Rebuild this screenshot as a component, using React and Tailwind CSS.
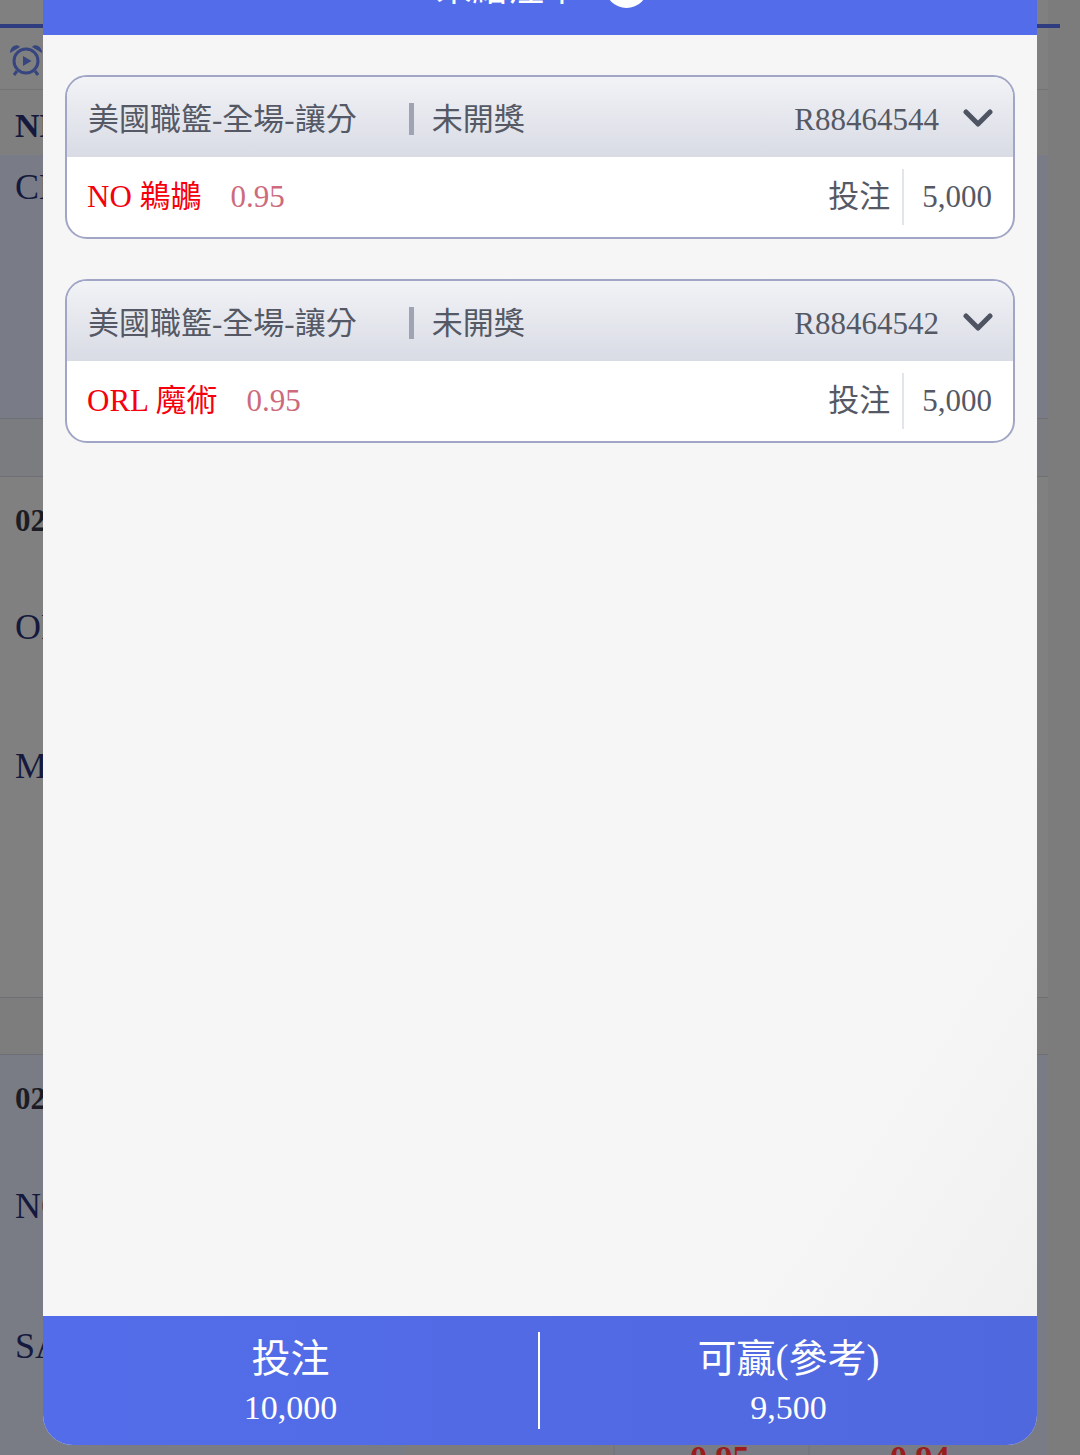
import React from 'react'

const bets = [
  { id: 'R88464544', team: 'NO 鵜鶘', odds: '0.95', amount: '5,000' },
  { id: 'R88464542', team: 'ORL 魔術', odds: '0.95', amount: '5,000' },
]

const AlarmIcon = () => (
  <svg width="34" height="34" viewBox="0 0 34 34" fill="none" className="shrink-0">
    <circle cx="17" cy="18" r="12" stroke="#36457f" strokeWidth="3" />
    <path d="M14 13 L22.5 18 L14 23 Z" fill="#36457f" />
    <path d="M1 10 C1 3 8 0 11 4 Z" fill="#36457f" />
    <path d="M33 10 C33 3 26 0 23 4 Z" fill="#36457f" />
    <path d="M8 28 L5 32 M26 28 L29 32" stroke="#36457f" strokeWidth="3" />
  </svg>
)

const Chevron = () => (
  <svg width="30" height="20" viewBox="0 0 30 20" fill="none" className="ml-[24px] mb-[4px] shrink-0">
    <path d="M3 3 L15 15 L27 3" stroke="#4f5462" strokeWidth="5" strokeLinecap="round" strokeLinejoin="round" />
  </svg>
)

const BetCard = ({ bet }) => (
  <div className="rounded-[22px] border-2 border-[#a1a6c6] bg-white overflow-hidden">
    <div className="h-[80px] flex items-center pt-[7px] pl-[21px] pr-[20px] bg-gradient-to-b from-[#f2f3f6] to-[#d9dbe5] text-[#555965]">
      <span className="text-[31px]">美國職籃-全場-讓分</span>
      <span className="ml-[52px] mb-[4px] w-[5px] h-[32px] bg-[#a0a4b2]" />
      <span className="ml-[18px] text-[31px]">未開獎</span>
      <span className="ml-auto text-[31px]">{bet.id}</span>
      <Chevron />
    </div>
    <div className="h-[80px] flex items-center pl-[20px] pr-[21px] text-[31px]">
      <span className="text-[#f5000c]">{bet.team}</span>
      <span className="ml-[29px] text-[#cd6a7c]">{bet.odds}</span>
      <span className="ml-auto text-[#555965]">投注</span>
      <span className="ml-[12px] w-[2px] h-[56px] bg-[#e3e5ee]" />
      <span className="ml-[18px] text-[#555965]">{bet.amount}</span>
    </div>
  </div>
)

const App = () => {
  return (
    <div className="relative w-[1080px] h-[1455px] overflow-hidden bg-[#7c7c7c] font-['Liberation_Serif','Noto_Sans_CJK_TC',serif] text-[36px] text-[#14193d]">
      {/* page behind the dialog */}
      <div className="w-[1048px]">
        <div className="h-[90px] bg-[#808080] border-b border-[#747474]">
          <div className="pt-[24px] w-[1060px]">
            <div className="h-[4px] bg-[#2f3d80]" />
          </div>
          <div className="pl-[9px] pt-[15px]">
            <AlarmIcon />
          </div>
        </div>
        <div className="h-[65px] bg-[#7f7f7f] pl-[15px] pt-[16px] font-bold text-[34px] leading-[40px]">NBA</div>
        <div className="h-[263px] bg-[#797c86] pl-[15px] pt-[12px] leading-[40px]">CLE</div>
        <div className="h-[59px] bg-[#7b7c80] border-t border-b border-[#6f7076]" />
        <div className="h-[520px] bg-[#808080] pl-[15px]">
          <div className="pt-[24px] font-bold text-[31px] leading-[40px] text-[#1c1d24]">02</div>
          <div className="pt-[66px] leading-[40px]">ORL</div>
          <div className="pt-[99px] leading-[40px]">MIA</div>
        </div>
        <div className="h-[58px] bg-[#7d7d7e] border-t border-b border-[#6f7076]" />
        <div className="h-[400px] bg-[#797c85] pl-[15px]">
          <div className="pt-[24px] font-bold text-[31px] leading-[40px] text-[#1c1d24]">02</div>
          <div className="pt-[67px] leading-[40px]">NO</div>
          <div className="pt-[100px] leading-[40px]">SAS</div>
          <div className="mt-[72px] ml-[390px] h-[40px] flex font-bold text-[#9a1c1c] text-[34px] leading-[40px]">
            <div className="w-[210px] bg-[#7c7c7e] border-r-2 border-[#767680]" />
            <div className="w-[195px] pl-[75px] border-r-2 border-[#767680]">0.95</div>
            <div className="w-[200px] pl-[80px]">0.94</div>
          </div>
        </div>
      </div>

      {/* dialog */}
      <div className="absolute left-[43px] top-[-50px] w-[994px] h-[1495px] flex flex-col rounded-b-[30px] overflow-hidden bg-gradient-to-br from-[#f6f6f7] from-80% to-[#eeeeef]">
        <div className="h-[85px] shrink-0 bg-[#536dea] flex items-center justify-center gap-[25px] pb-[13px] pl-[4px] text-white">
          <span className="pt-[6px] text-[36px]">未結注單</span>
          <span className="w-[43px] h-[43px] rounded-full bg-white" />
        </div>
        <div className="flex-1 flex flex-col gap-[40px] px-[22px] pt-[40px]">
          {bets.map((bet) => (
            <BetCard key={bet.id} bet={bet} />
          ))}
        </div>
        <div className="h-[129px] shrink-0 bg-gradient-to-r from-[#536dea] to-[#5068de] flex items-center text-white text-center">
          <div className="w-[495px] pt-[2px]">
            <p className="text-[39px] leading-[50px]">投注</p>
            <p className="pt-[2px] text-[34px] leading-[44px]">10,000</p>
          </div>
          <div className="w-[2px] h-[97px] bg-white" />
          <div className="flex-1 pt-[2px]">
            <p className="text-[39px] leading-[50px]">可贏(參考)</p>
            <p className="pt-[2px] text-[34px] leading-[44px]">9,500</p>
          </div>
        </div>
      </div>
    </div>
  )
}

export default App
